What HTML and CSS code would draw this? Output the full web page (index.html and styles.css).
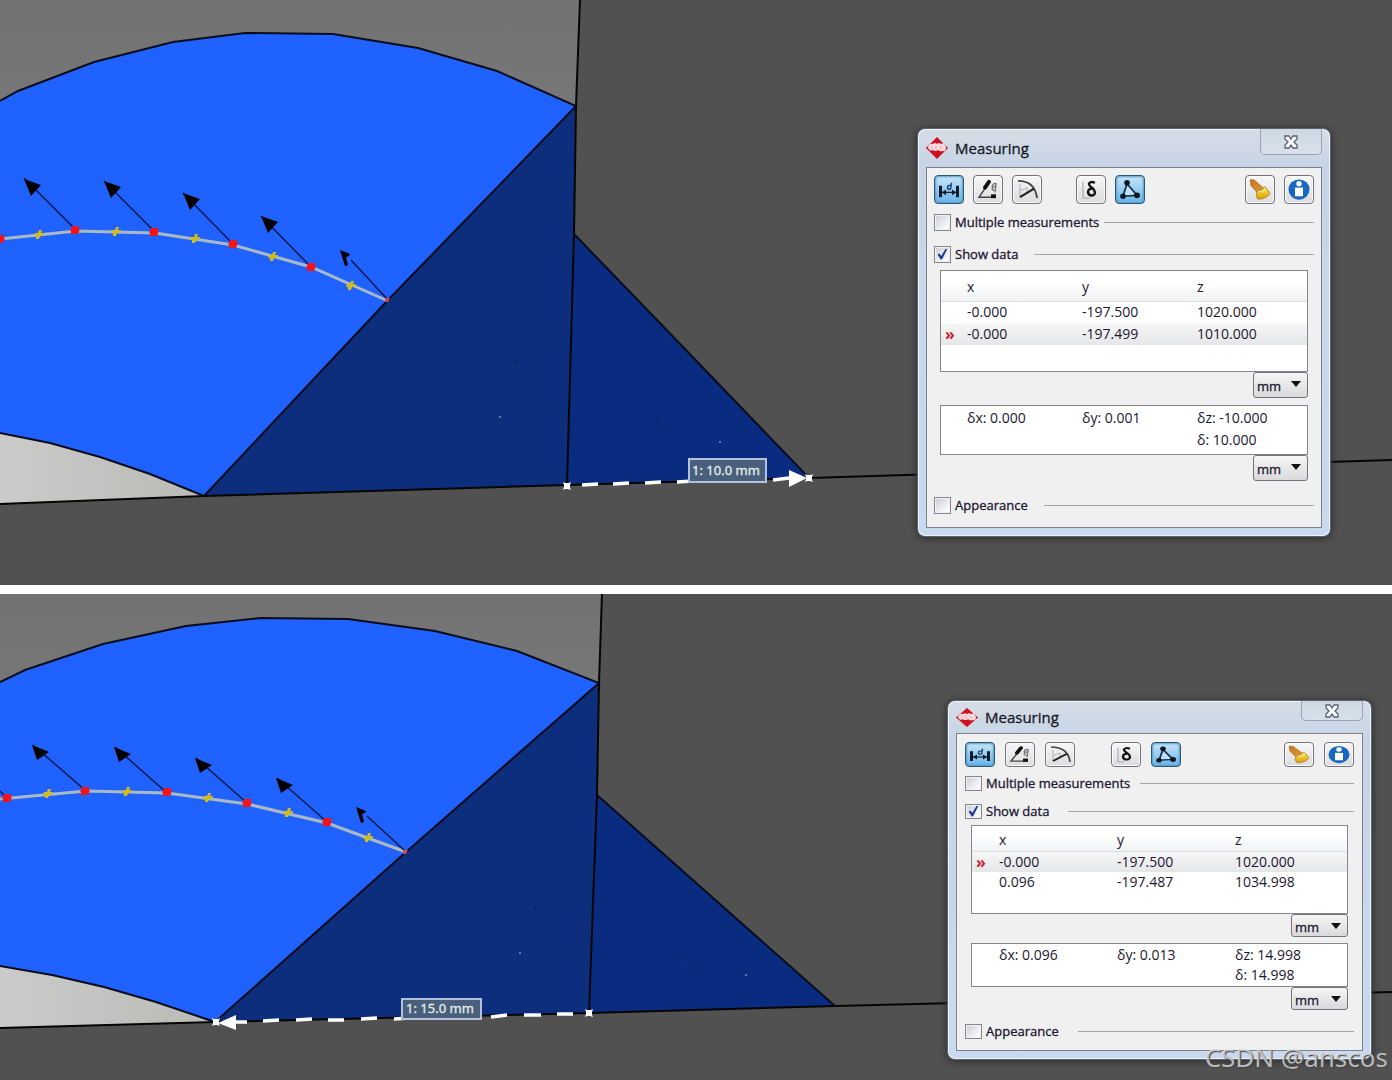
FILE: index.html
```html
<!DOCTYPE html>
<html lang="en">
<head>
<meta charset="utf-8">
<meta name="viewport" content="width=device-width, initial-scale=1">
<title>Measuring</title>
<link rel="stylesheet" href="styles.css">
</head>
<body>
<svg class="sprite" aria-hidden="true">
  <defs>
    <linearGradient id="broom-handle" x1="0" y1="0" x2="1" y2="1"><stop offset="0" stop-color="#c9761c"/><stop offset="1" stop-color="#e09a3c"/></linearGradient>
    <linearGradient id="broom-head" x1="0" y1="0" x2="0" y2="1"><stop offset="0" stop-color="#ffe95a"/><stop offset="1" stop-color="#d99f08"/></linearGradient>
    <linearGradient id="wall" x1="0" y1="0" x2="0" y2="1"><stop offset="0" stop-color="#727272"/><stop offset="1" stop-color="#777"/></linearGradient>
    <linearGradient id="ground" x1="0" y1="0" x2="1" y2="0"><stop offset="0" stop-color="#cbcbcb"/><stop offset="1" stop-color="#b9b9b5"/></linearGradient>
    <path id="head" d="M0 0l17 6-10 11z"/>
    <path id="head-flat" d="M0 0l17 7-12 8z"/>
    <path id="head-cut" d="M0 0l10 4-1 2-3 1 2 8-3 1z"/>
    <path id="node" d="M-3-4h7v3h1l-2 5h-7v-3h-1z"/>
    <path id="mid" d="M0-4h3l-1 3h3l-1 3h-3l-1 3h-3v-3h-2l1-3h3z"/>
    <path id="pin" d="M-4-4l2 1h4l2-1-1 3v3l1 2-3-1h-3l-2 1 1-3v-2z"/>
  </defs>
  <symbol id="logo" viewBox="0 0 22 22" preserveAspectRatio="none">
    <path d="M11 0L22 11 11 22 0 11z" fill="#cf1020"/>
    <path d="M2 10q1-4 5-3 2-2 4 0 2-2 4 0l3-1 2 4q0 5-3 4-3 1-5-1-3 2-5 0-4 2-5-3z" fill="#f7d9dc"/>
    <path d="M6 9v3M10 9v3M14 9l1 3" stroke="#e8a0a8" fill="none"/>
  </symbol>
  <symbol id="close" viewBox="0 0 16 14" preserveAspectRatio="none">
    <path d="M2 1h4l2 3 2-3h4v3l-3 3 3 3v3h-4l-2-3-2 3H2v-3l3-3-3-3z" fill="#fafbfd" stroke="#5b6075" stroke-width="1.3"/>
  </symbol>
  <symbol id="distance" viewBox="0 0 28 28" preserveAspectRatio="none">
    <path d="M4 10h3v12H4zM21 10h3v12h-3z" fill="#101a2a"/>
    <path d="M7 17h14" stroke="#15283c" stroke-width="1.5"/>
    <path d="M7 17l4-3v6zM21 17l-4-3v6z" fill="#101a2a"/>
    <path d="M16.500 7l-1 7M15.500 10q-3-1-3 2t3 1" stroke="#1b3f73" stroke-width="1.500" fill="none"/>
  </symbol>
  <symbol id="angle" viewBox="0 0 28 28" preserveAspectRatio="none">
    <path d="M13 10L5 22h14" stroke="#444" fill="none" stroke-width="1.500"/>
    <path d="M11 12l4-6" stroke="#111" stroke-width="4" stroke-linecap="round"/>
    <path d="M18 11q1-4 4-3l-1 9M21 11h-2q-2 3 1 4" stroke="#777" stroke-width="1.500" fill="none"/>
    <path d="M17 19h5v4h-5z" fill="#111"/>
  </symbol>
  <symbol id="radius" viewBox="0 0 28 28" preserveAspectRatio="none">
    <path d="M5 5q17 0 19 18" stroke="#444" stroke-width="1.800" fill="none"/>
    <path d="M7 8v14M8 15l6-3v5" stroke="#aaa" fill="none"/>
    <path d="M7 22l14-9" stroke="#222" stroke-width="2.200"/>
  </symbol>
  <symbol id="delta" viewBox="0 0 28 28" preserveAspectRatio="none">
    <path d="M6 6v17M6 23h6" stroke="#b4b4b8" fill="none" stroke-width="1.400"/>
    <path d="M18 7q-5-2-6 1 0 2 4 5 4 5 0 7-4 1-5-3 0-4 4-4" stroke="#111" fill="none" stroke-width="2.400"/>
  </symbol>
  <symbol id="triangle" viewBox="0 0 28 28" preserveAspectRatio="none">
    <path d="M11 8L7 21l14-1z" fill="#bfe0f8" stroke="#16304c" stroke-width="1.800"/>
    <circle cx="11" cy="7" r="2.800" fill="#0c1828"/><circle cx="7" cy="21" r="2.800" fill="#0c1828"/><circle cx="21" cy="20" r="3" fill="#0c1828"/>
  </symbol>
  <symbol id="broom" viewBox="0 0 28 28" preserveAspectRatio="none">
    <path d="M4 4h4l10 9-7 4-6-7z" fill="url(#broom-handle)" stroke="#9a5a18" stroke-width=".6"/>
    <path d="M11 16q5-1 8-5l5 7q-3 6-12 6-3-3-1-8z" fill="url(#broom-head)" stroke="#a8790c" stroke-width=".8"/>
    <path d="M12 16q5 1 8-3" stroke="#fff3a0" fill="none"/>
  </symbol>
  <symbol id="info" viewBox="0 0 28 28" preserveAspectRatio="none">
    <circle cx="14" cy="14" r="10.500" fill="#1668c0"/>
    <circle cx="14" cy="8" r="2.700" fill="#fff"/>
    <path d="M10 12h8v9h-8z" fill="#fff"/>
  </symbol>
</svg>

<main class="board">
  <section class="scene">
    <svg class="model" viewBox="0 0 1392 585" preserveAspectRatio="xMinYMin slice" role="img" aria-label="Blade model, 10 mm measurement">
      <rect width="1392" height="585" fill="#515151"/>
      <path d="M0 0h580l-4 106L0 110z" fill="url(#wall)"/>
      <path d="M0 433l50 10 50 14 50 17 54 22L0 504z" fill="url(#ground)"/>
      <path class="face-light" d="M0 101l18-10 76-29 79-20 72-9 88 1 85 14 79 23 79 35L388 300 204 496l-54-22-50-17-50-14-50-10z"/>
      <path class="face-dark" d="M576 106l-2 128-7 251-363 11 184-196z"/>
      <path class="face-side" d="M574 234l110 114 125 130-242 7z"/>
      <path class="edge" d="M0 101l18-10 76-29 79-20 72-9 88 1 85 14 79 23 79 35L388 300 204 496l-54-22-50-17-50-14-50-10M574 234l110 114 125 130"/>
      <path class="edge-strong" d="M580 0l-4 106-2 128-7 251M0 504l204-8 363-11 242-7 583-18"/>
      <path d="M506 350l2 3M514 360l2 4M656 418l3 4M662 425l2 3" class="speck-dark"/>
      <path d="M499 416h2v2h-2zM719 441h2v2h-2z" class="speck"/>
      <path class="camber" d="M0 239l76-8 79 2 78 12 78 22 77 34"/>
      <path class="vector" d="M24 178l52 52M104 181l51 51M183 193l50 51M261 216l50 51M351 260l37 40"/>
      <use href="#head" x="24" y="179"/><use href="#head" x="104" y="181"/><use href="#head" x="183" y="193"/><use href="#head" x="261" y="216"/><use href="#head-cut" x="340" y="250"/>
      <g fill="#d0bc20"><use href="#mid" x="39" y="234"/><use href="#mid" x="116" y="231"/><use href="#mid" x="195" y="238"/><use href="#mid" x="273" y="256"/><use href="#mid" x="351" y="285"/></g>
      <g fill="#f0141e"><use href="#node" y="239"/><use href="#node" x="75" y="230"/><use href="#node" x="154" y="232"/><use href="#node" x="233" y="244"/><use href="#node" x="311" y="267"/></g>
      <path d="M385 298h5l-2 4h-3z" fill="#c84858"/>
      <path class="dash" d="M582 485l16-1M613 484l16-1M645 483l16-1M677 482l16-1M773 480l16-2"/>
      <g fill="#fff"><use href="#pin" x="567" y="486"/><use href="#pin" x="809" y="478"/><path d="M789 470l18 8-18 9z"/></g>
      <rect class="tag" x="689" y="459" width="77" height="23"/>
      <text class="tag-text" x="692" y="475">1: 10.0 mm</text>
    </svg>

    <form class="window window-upper">
      <header class="titlebar">
        <svg class="logo" aria-hidden="true"><use href="#logo"/></svg>
        <h2 class="title">Measuring</h2>
        <button class="close" type="button" aria-label="Close"><svg aria-hidden="true"><use href="#close"/></svg></button>
      </header>
      <div class="panel">
        <div class="toolbar">
          <button class="tool on" type="button" aria-label="Distance"><svg aria-hidden="true"><use href="#distance"/></svg></button>
          <button class="tool" type="button" aria-label="Angle"><svg aria-hidden="true"><use href="#angle"/></svg></button>
          <button class="tool" type="button" aria-label="Radius"><svg aria-hidden="true"><use href="#radius"/></svg></button>
          <button class="tool apart" type="button" aria-label="Delta"><svg aria-hidden="true"><use href="#delta"/></svg></button>
          <button class="tool on" type="button" aria-label="Points"><svg aria-hidden="true"><use href="#triangle"/></svg></button>
          <button class="tool end" type="button" aria-label="Clear"><svg aria-hidden="true"><use href="#broom"/></svg></button>
          <button class="tool" type="button" aria-label="Info"><svg aria-hidden="true"><use href="#info"/></svg></button>
        </div>
        <div class="option"><label><input type="checkbox">Multiple measurements</label><span class="rule near"></span></div>
        <div class="option show"><label><input type="checkbox" checked>Show data</label><span class="rule"></span></div>
        <div class="box points">
          <table>
            <thead><tr><th class="mark"></th><th class="axis">x</th><th class="axis">y</th><th>z</th></tr></thead>
            <tbody>
              <tr><td></td><td>-0.000</td><td>-197.500</td><td>1020.000</td></tr>
              <tr class="current"><td class="pointer">»</td><td>-0.000</td><td>-197.499</td><td>1010.000</td></tr>
            </tbody>
          </table>
        </div>
        <div class="unit"><select aria-label="Point unit"><option>mm</option></select></div>
        <div class="box deltas">
          <table>
            <tbody>
              <tr><td class="mark"></td><td class="axis">δx: 0.000</td><td class="axis">δy: 0.001</td><td>δz: -10.000</td></tr>
              <tr><td></td><td></td><td></td><td>δ: 10.000</td></tr>
            </tbody>
          </table>
        </div>
        <div class="unit"><select aria-label="Distance unit"><option>mm</option></select></div>
        <div class="option last"><label><input type="checkbox">Appearance</label><span class="rule"></span></div>
      </div>
    </form>
  </section>

  <section class="scene">
    <svg class="model" viewBox="0 0 1392 486" preserveAspectRatio="xMinYMin slice" role="img" aria-label="Blade model, 15 mm measurement">
      <rect width="1392" height="486" fill="#515151"/>
      <path d="M0 0h602l-3 89L0 92z" fill="url(#wall)"/>
      <path d="M0 372l52 9 52 12 52 15 59 20L0 434z" fill="url(#ground)"/>
      <path class="face-light" d="M0 88l25-12 78-26 83-18 74-8 88 1 87 12 82 20 82 32L406 258 215 428l-59-20-52-15-52-12-52-9z"/>
      <path class="face-dark" d="M599 89l-2 112-8 218-374 9 191-170z"/>
      <path class="face-side" d="M597 201l238 211-246 7z"/>
      <path class="edge" d="M0 88l25-12 78-26 83-18 74-8 88 1 87 12 82 20 82 32L406 258 215 428l-59-20-52-15-52-12-52-9M597 201l238 211"/>
      <path class="edge-strong" d="M602 0l-3 89-2 112-8 218M0 434l215-6 374-9 246-7 557-14"/>
      <path d="M527 303l2 3M534 312l2 4M682 363l3 4M688 369l2 3" class="speck-dark"/>
      <path d="M519 358h2v2h-2zM745 380h2v2h-2z" class="speck"/>
      <path class="camber" d="M0 205l86-8 81 2 80 11 80 19 79 29"/>
      <path class="vector" d="M33 151l53 46M115 153l52 46M196 164l51 45M277 184l50 44M367 222l38 35M0 197l5 5"/>
      <use href="#head-flat" x="32" y="151"/><use href="#head-flat" x="114" y="153"/><use href="#head-flat" x="195" y="164"/><use href="#head-flat" x="276" y="184"/><use href="#head-cut" x="356" y="213"/>
      <g fill="#d0bc20"><use href="#mid" x="48" y="199"/><use href="#mid" x="127" y="197"/><use href="#mid" x="208" y="203"/><use href="#mid" x="288" y="218"/><use href="#mid" x="368" y="243"/></g>
      <g fill="#f0141e"><use href="#node" x="7" y="204"/><use href="#node" x="85" y="197"/><use href="#node" x="167" y="198"/><use href="#node" x="247" y="209"/><use href="#node" x="327" y="228"/></g>
      <path d="M403 256h5l-2 4h-3z" fill="#c84858"/>
      <path class="dash" d="M235 428h12M263 427l16-1M296 426l16-1M328 426h16M361 425l16-1M394 425l16-1M491 423l16-2M524 421h17M557 420h16"/>
      <g fill="#fff"><use href="#pin" x="589" y="419"/><use href="#pin" x="216" y="428"/><path d="M218 429l18-8v15z"/></g>
      <rect class="tag" x="402" y="405" width="79" height="20"/>
      <text class="tag-text" x="406" y="419">1: 15.0 mm</text>
    </svg>

    <form class="window window-lower">
      <header class="titlebar">
        <svg class="logo" aria-hidden="true"><use href="#logo"/></svg>
        <h2 class="title">Measuring</h2>
        <button class="close" type="button" aria-label="Close"><svg aria-hidden="true"><use href="#close"/></svg></button>
      </header>
      <div class="panel">
        <div class="toolbar">
          <button class="tool on" type="button" aria-label="Distance"><svg aria-hidden="true"><use href="#distance"/></svg></button>
          <button class="tool" type="button" aria-label="Angle"><svg aria-hidden="true"><use href="#angle"/></svg></button>
          <button class="tool" type="button" aria-label="Radius"><svg aria-hidden="true"><use href="#radius"/></svg></button>
          <button class="tool apart" type="button" aria-label="Delta"><svg aria-hidden="true"><use href="#delta"/></svg></button>
          <button class="tool on" type="button" aria-label="Points"><svg aria-hidden="true"><use href="#triangle"/></svg></button>
          <button class="tool end" type="button" aria-label="Clear"><svg aria-hidden="true"><use href="#broom"/></svg></button>
          <button class="tool" type="button" aria-label="Info"><svg aria-hidden="true"><use href="#info"/></svg></button>
        </div>
        <div class="option"><label><input type="checkbox">Multiple measurements</label><span class="rule near"></span></div>
        <div class="option show"><label><input type="checkbox" checked>Show data</label><span class="rule"></span></div>
        <div class="box points">
          <table>
            <thead><tr><th class="mark"></th><th class="axis">x</th><th class="axis">y</th><th>z</th></tr></thead>
            <tbody>
              <tr class="current"><td class="pointer">»</td><td>-0.000</td><td>-197.500</td><td>1020.000</td></tr>
              <tr><td></td><td>0.096</td><td>-197.487</td><td>1034.998</td></tr>
            </tbody>
          </table>
        </div>
        <div class="unit"><select aria-label="Point unit"><option>mm</option></select></div>
        <div class="box deltas">
          <table>
            <tbody>
              <tr><td class="mark"></td><td class="axis">δx: 0.096</td><td class="axis">δy: 0.013</td><td>δz: 14.998</td></tr>
              <tr><td></td><td></td><td></td><td>δ: 14.998</td></tr>
            </tbody>
          </table>
        </div>
        <div class="unit"><select aria-label="Distance unit"><option>mm</option></select></div>
        <div class="option last"><label><input type="checkbox">Appearance</label><span class="rule"></span></div>
      </div>
    </form>
    <p class="watermark">CSDN @anscos</p>
  </section>
</main>
</body>
</html>
```
FILE: styles.css
```css
* { box-sizing: border-box; }

body {
  margin: 0;
  background: #fff;
  font-family: "Open Sans", "Noto Sans", sans-serif;
  color: #1c1630;
}

.sprite { position: absolute; width: 0; height: 0; }

.board {
  display: grid;
  grid-template-rows: 585fr 486fr;
  gap: 9px;
  min-height: 100vh;
}

.scene { position: relative; overflow: hidden; background: #515151; }

/* 3D model */
.model { position: absolute; inset: 0; width: 100%; height: 100%; }
.face-light { fill: #1f62ff; }
.face-dark { fill: #0d2d7d; }
.face-side { fill: #0a2c80; }
.edge { fill: none; stroke: #080c1c; stroke-width: 2; }
.edge-strong { fill: none; stroke: #050505; stroke-width: 2; }
.camber { fill: none; stroke: #a9bac4; stroke-width: 3; }
.vector { fill: none; stroke: #081848; stroke-width: 1.5; }
.dash { fill: none; stroke: #fff; stroke-width: 3.5; }
.speck { fill: #6078a8; }
.speck-dark { stroke: #081c50; }
.tag { fill: #48607c; stroke: #b4c0dc; stroke-width: 2; }
.tag-text { fill: #e4ece8; stroke: #e4ece8; stroke-width: 0.3; font-family: "Noto Sans", sans-serif; font-size: 13px; }

/* Floating window */
.window {
  --title-h: 38px;
  --logo-h: 22px;
  --frame: 8px;
  --pad: 7px;
  --tool-h: 29px;
  --tool-gap: 9px;
  --group-gap: 25px;
  --row-h: 18px;
  --check: 17px;
  --first-gap: 9px;
  --row-gap: 14px;
  --box-gap: 7px;
  --head-h: 30px;
  --line-h: 22px;
  --axis-w: 115px;
  --points-h: 102px;
  --deltas-h: 50px;
  --unit-w: 55px;
  --unit-h: 26px;
  --last-gap: 15px;
  --mark-w: 26px;
  --rule-gap: 16px;
  --rule-near: 5px;
  position: absolute;
  padding: 0 var(--frame) var(--frame);
  border: 1px solid #5b6470;
  border-radius: 8px;
  background: linear-gradient(#d6dde6, #c6d4e6 40px, #c9daf0);
  box-shadow: inset 0 0 0 1px #eef4fa, 0 1px 6px 1px #303030;
}

.window-upper { top: 128px; right: 61px; width: 414px; }

.window-lower {
  --title-h: 32px;
  --logo-h: 19px;
  --pad: 8px;
  --tool-h: 25px;
  --tool-gap: 10px;
  --group-gap: 26px;
  --row-h: 16px;
  --check: 15px;
  --first-gap: 8px;
  --row-gap: 12px;
  --box-gap: 6px;
  --head-h: 25px;
  --line-h: 20px;
  --axis-w: 118px;
  --points-h: 89px;
  --deltas-h: 44px;
  --unit-w: 57px;
  --unit-h: 23px;
  --last-gap: 13px;
  --mark-w: 27px;
  --rule-gap: 19px;
  --rule-near: 10px;
  top: 106px;
  right: 20px;
  width: 425px;
}

.titlebar { display: flex; align-items: center; height: var(--title-h); }
.logo { width: 22px; height: var(--logo-h); }
.title { flex: 1; margin: 0 0 0 7px; font-size: 15px; line-height: 20px; font-weight: 400; color: #16181f; -webkit-text-stroke: 0.3px #16181f; }
.close {
  display: flex;
  align-items: center;
  justify-content: center;
  align-self: flex-start;
  width: 62px;
  height: calc(var(--title-h) - 12px);
  padding: 0;
  border: 1px solid #99a3b3;
  border-top: 0;
  border-radius: 0 0 5px 5px;
  background: linear-gradient(#ced8e3, #d7e1ec);
}
.close svg { width: 16px; height: 14px; }

.panel {
  padding: var(--pad);
  padding-bottom: calc(var(--last-gap) - 2px);
  border: 1px solid #7c818c;
  background: #f0f0f1;
}

.toolbar { display: flex; gap: var(--tool-gap); }
.tool {
  width: 30px;
  height: var(--tool-h);
  padding: 0;
  border: 1px solid #72727c;
  border-radius: 4px;
  background: linear-gradient(#f7f7f8, #dcdcde);
  box-shadow: inset 0 0 0 1px #fbfbfb;
}
.tool svg { display: block; width: 28px; height: 100%; }
.tool.on { border-color: #2c5878; background: linear-gradient(#c8e5f9, #68b5e8); box-shadow: inset 0 0 2px 1px #5a9cc8; }
.tool.apart { margin-left: var(--group-gap); }
.tool.end { margin-left: auto; }

.option { display: flex; align-items: center; height: var(--row-h); margin-top: var(--first-gap); }
.option.show { margin-top: var(--row-gap); }
.option.last { margin-top: var(--last-gap); }
.option label { display: flex; align-items: center; gap: 4px; font-size: 13px; line-height: 18px; -webkit-text-stroke: 0.3px #1c1630; }
.option input {
  appearance: none;
  display: grid;
  place-items: center;
  width: 17px;
  height: var(--check);
  margin: 0;
  border: 1px solid #83868e;
  background: linear-gradient(135deg, #c9ccd2, #fafafa 80%);
  box-shadow: inset 0 0 0 1px #f2f2f2;
}
.option input:checked::before {
  content: "";
  width: 10px;
  height: 11px;
  background: #173a9c;
  clip-path: polygon(0 55%, 20% 45%, 38% 68%, 82% 0, 100% 0, 45% 100%, 32% 100%);
}
.rule { flex: 1; height: 1px; margin-left: var(--rule-gap); background: #a3a4aa; }
.rule.near { margin-left: var(--rule-near); }

.box { margin: var(--box-gap) 6px 0; border: 1px solid #83868f; background: #fff; }
.points { height: var(--points-h); }
.deltas { height: var(--deltas-h); padding-top: 1px; }
.box table { width: 100%; table-layout: fixed; border-collapse: collapse; font-size: 14px; }
.box th, .box td { height: var(--line-h); padding: 0; font-weight: 400; text-align: left; line-height: 20px; white-space: nowrap; }
.box th { height: var(--head-h); background: linear-gradient(#fff 40%, #f0f2f4); border-bottom: 1px solid #dcdfe2; padding-top: 3px; }
.box .mark { width: var(--mark-w); }
.box .axis { width: var(--axis-w); }
.current { background: linear-gradient(#f7f7f7, #e5e6e8); }
.box .pointer { padding-left: 4px; color: #c8202c; font-size: 16px; font-weight: 700; }

.unit { display: flex; justify-content: flex-end; position: relative; margin: 0 6px; }
.unit select {
  appearance: none;
  width: var(--unit-w);
  height: var(--unit-h);
  padding: 2px 3px 0;
  border: 1px solid #72737b;
  border-radius: 3px;
  background: linear-gradient(#f5f5f5, #dadadc);
  color: #1c1630;
  font: 13px/18px "Open Sans", "Noto Sans", sans-serif;
  -webkit-text-stroke: 0.3px #1c1630;
}
.unit::after {
  content: "";
  position: absolute;
  top: 9px;
  right: 7px;
  border: 5px solid transparent;
  border-top: 6px solid #111;
  border-bottom: 0;
  pointer-events: none;
}

.watermark {
  position: absolute;
  right: 4px;
  bottom: 8px;
  margin: 0;
  font-family: "Noto Sans", sans-serif;
  font-size: 26px;
  line-height: 30px;
  color: rgba(225, 225, 225, 0.75);
  text-shadow: 1px 1px 1px #444;
}
```
